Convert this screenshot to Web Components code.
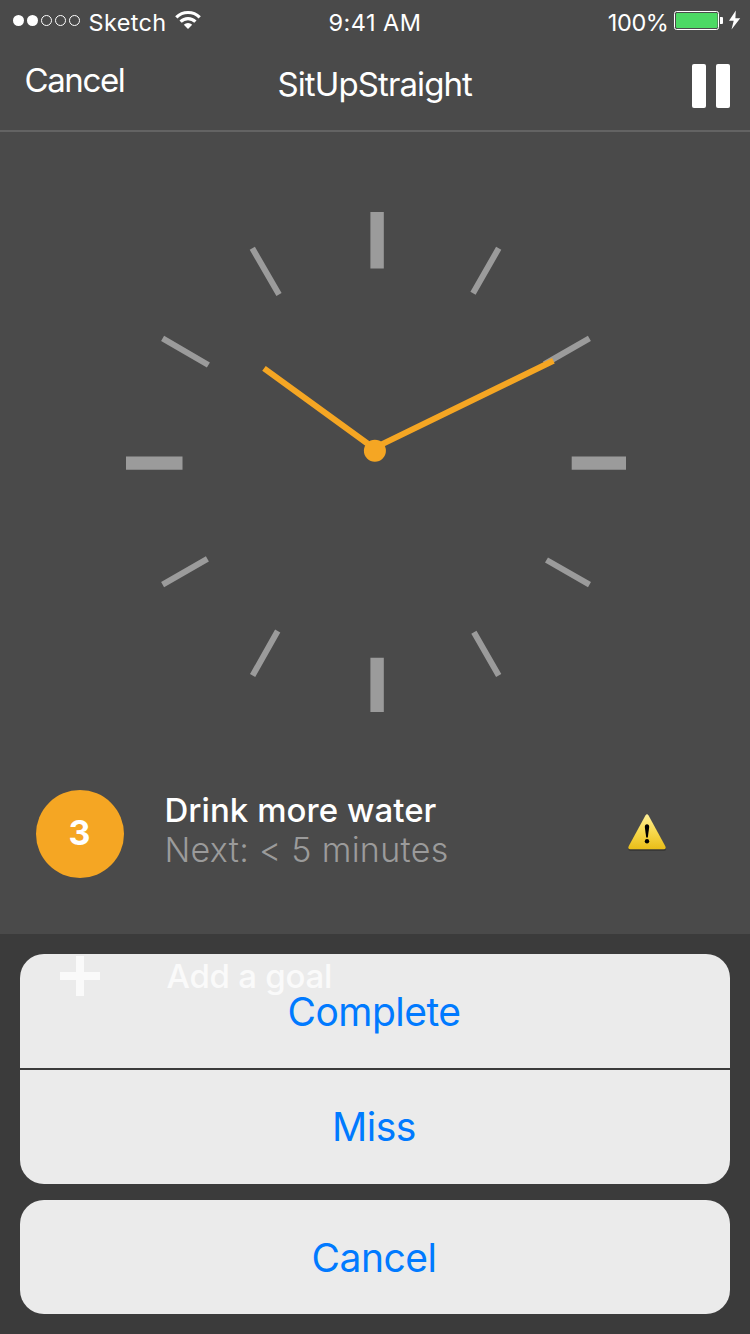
<!DOCTYPE html>
<html lang="en">
<head>
<meta charset="utf-8">
<title>SitUpStraight</title>
<style>
html,body{margin:0;padding:0}
body{width:750px;height:1334px;overflow:hidden;background:#4a4a4a;color:#fff;font-family:Inter,"Liberation Sans",sans-serif}
</style>
</head>
<body>
<app-screen></app-screen>
<script>
const define = (name, html) => customElements.define(name, class extends HTMLElement {
  constructor() {
    super();
    const t = document.createElement('template');
    t.innerHTML = html;
    this.attachShadow({ mode: 'open' }).append(t.content.cloneNode(true));
  }
});

define('status-bar', `
<style>
:host{display:grid;grid-template-columns:1fr auto 1fr;height:40px;font-size:23.5px;line-height:46px;white-space:nowrap}
div{display:flex;align-items:flex-start}
svg{display:block;flex:none}
.carrier{width:77.5px;margin-left:6.5px;letter-spacing:.35px}
.time{letter-spacing:.45px}
.right{justify-content:flex-end}
.pct{letter-spacing:-.4px;margin-right:4.500px}
</style>
<div>
  <svg width="82" height="40" viewBox="0 0 82 40"><g fill="#fff"><circle cx="18.5" cy="20.5" r="5.5"/><circle cx="32.5" cy="20.5" r="5.5"/></g><g fill="none" stroke="#fff"><circle cx="46.5" cy="20.5" r="5"/><circle cx="60.5" cy="20.5" r="5"/><circle cx="74.5" cy="20.5" r="5"/></g></svg>
  <span class="carrier">Sketch</span>
  <svg style="margin-left:8px" width="28" height="40" viewBox="174 0 28 40"><path fill="none" stroke="#fff" stroke-width="3.2" d="M176.3 17.3A16.6 16.6 0 0 1 199.7 17.3M180.6 21.7A10.5 10.5 0 0 1 195.4 21.7"/><path fill="#fff" d="M188 29l-4.2-4.2a6 6 0 0 1 8.400 0z"/></svg>
</div>
<div class="time">9:41 AM</div>
<div class="right"><span class="pct">100%</span>
  <svg width="77" height="40" viewBox="673 0 77 40"><rect x="674.5" y="11.500" width="44" height="18" rx="2" fill="none" stroke="#fff"/><rect x="676" y="13" width="41.500" height="15" rx="1" fill="#4cd964"/><path fill="#fff" d="M720 17h2q1 0 1 1v5q0 1-1 1h-2zM735.800 10.500L729 20.800h4.700L731.500 29.500L740.200 18.200h-4.800z"/></svg>
</div>`);

define('nav-bar', `
<style>
:host{display:grid;grid-template-columns:1fr auto 1fr;height:90px;border-bottom:2px solid #636363;font-size:33px;line-height:40px}
.back{padding:20px 0 0 24.500px;letter-spacing:-1.4px}
.title{padding-top:24px;letter-spacing:-.9px;text-indent:-.5px}
.pause{display:flex;justify-content:flex-end;gap:10px;padding:24px 20px 0 0}
i{width:14px;height:44px;border-radius:2px;background:#fff}
</style>
<div class="back"><slot name="back"></slot></div>
<div class="title"><slot></slot></div>
<div class="pause"><i></i><i></i></div>`);

define('clock-face', `
<style>:host{display:block;height:630px}svg{display:block}</style>
<svg width="750" height="630" viewBox="0 132 750 630" fill="none">
<g stroke="#9b9b9b" stroke-width="13.400">
<path d="M377.100 212V268.400M377.100 657.700V712M126 463.100H182.500M571.700 463.100H626"/>
<path stroke-width="6" d="M252.300 248.300L279 294.600M162.600 338.300L208.400 365M498.700 248.300L473 293.200M589.400 338.300L544.500 364.200M162.600 584.700L207.400 558.900M252.600 675.500L277.700 631M546.500 560L589.500 584.700M473.900 632.200L498.700 675.500"/>
</g>
<path stroke="#f5a623" stroke-width="6" d="M264 368.400L375 449M553.400 360.800L375 447.600"/>
<circle cx="374.900" cy="450.800" r="11" fill="#f5a623"/>
</svg>`);

define('goal-row', `
<style>
:host{display:flex;align-items:flex-start;height:116px;padding:28px 82px 0 36px;box-sizing:content-box}
.badge{flex:none;width:88px;height:88px;border-radius:50%;background:#f5a623;font-size:34px;font-weight:700;line-height:85px;text-align:center;text-indent:-1px}
.text{flex:1;margin:1px 0 0 40.500px;font-size:33px;line-height:39px;white-space:nowrap}
.name{font-weight:500;letter-spacing:.05px}
.next{font-size:34px;font-weight:300;color:#9b9b9b;letter-spacing:.3px}
svg{flex:none;margin-top:22px}
</style>
<div class="badge"><slot name="count"></slot></div>
<div class="text"><div class="name"><slot name="name"></slot></div><div class="next"><slot name="next"></slot></div></div>
<svg width="40" height="42" viewBox="0 0 40 42">
<defs><linearGradient id="y" x1="0" y1="0" x2="0" y2="1"><stop stop-color="#fff09a"/><stop offset=".5" stop-color="#f7d94d"/><stop offset="1" stop-color="#e9bd18"/></linearGradient></defs>
<path d="M17.400 3.500Q19 .8 20.600 3.500L37.200 34.500Q38.700 38 35.500 38H2.500Q-.7 38 .8 34.500Z" transform="translate(.2 1)" fill="#333" opacity=".75"/>
<path d="M17.400 3.500Q19 .8 20.600 3.500L37.200 34Q38.700 37.300 35.500 37.300H2.500Q-.7 37.300 .8 34Z" fill="url(#y)"/>
<path d="M16.800 15q0-2.800 2.200-2.800t2.200 2.800L19.800 25.500h-1.600z" fill="#000"/><circle cx="19" cy="29.200" r="2.200" fill="#000"/>
</svg>`);

define('add-row', `
<style>
:host{display:flex;align-items:center;height:84px;padding-left:60px;font-size:33px;font-weight:500;letter-spacing:-.25px}
svg{display:block;margin-right:66.500px}
</style>
<svg width="40" height="40"><path fill="#fff" d="M16 0h8v16h16v8H24v16h-8V24H0v-8h16z"/></svg>
<slot></slot>`);

define('sheet-button', `
<style>
:host{display:block;height:114px;line-height:116px;text-align:center;text-indent:-2px;background:rgba(255,255,255,.897);color:#007aff;font-size:39px;letter-spacing:-.5px}
</style><slot></slot>`);

define('action-sheet', `
<style>
:host{position:absolute;left:0;right:0;bottom:0;height:400px;box-sizing:border-box;padding:20px;background:rgba(0,0,0,.2);display:flex;flex-direction:column;gap:16px}
.group{display:flex;flex-direction:column;gap:2px;border-radius:24px;overflow:hidden}
</style>
<div class="group"><slot></slot></div>
<div class="group"><slot name="cancel"></slot></div>`);

define('app-screen', `
<style>
:host{display:flex;flex-direction:column;position:relative;width:750px;height:1334px;background:#4a4a4a;overflow:hidden}
.miss{line-height:114px}
</style>
<status-bar></status-bar>
<nav-bar><span slot="back">Cancel</span>SitUpStraight</nav-bar>
<clock-face></clock-face>
<goal-row><span slot="count">3</span><span slot="name">Drink more water</span><span slot="next">Next: &lt; 5 minutes</span></goal-row>
<div style="height:28px"></div>
<add-row>Add a goal</add-row>
<action-sheet>
<sheet-button>Complete</sheet-button>
<sheet-button class="miss">Miss</sheet-button>
<sheet-button slot="cancel">Cancel</sheet-button>
</action-sheet>`);
</script>
</body>
</html>
